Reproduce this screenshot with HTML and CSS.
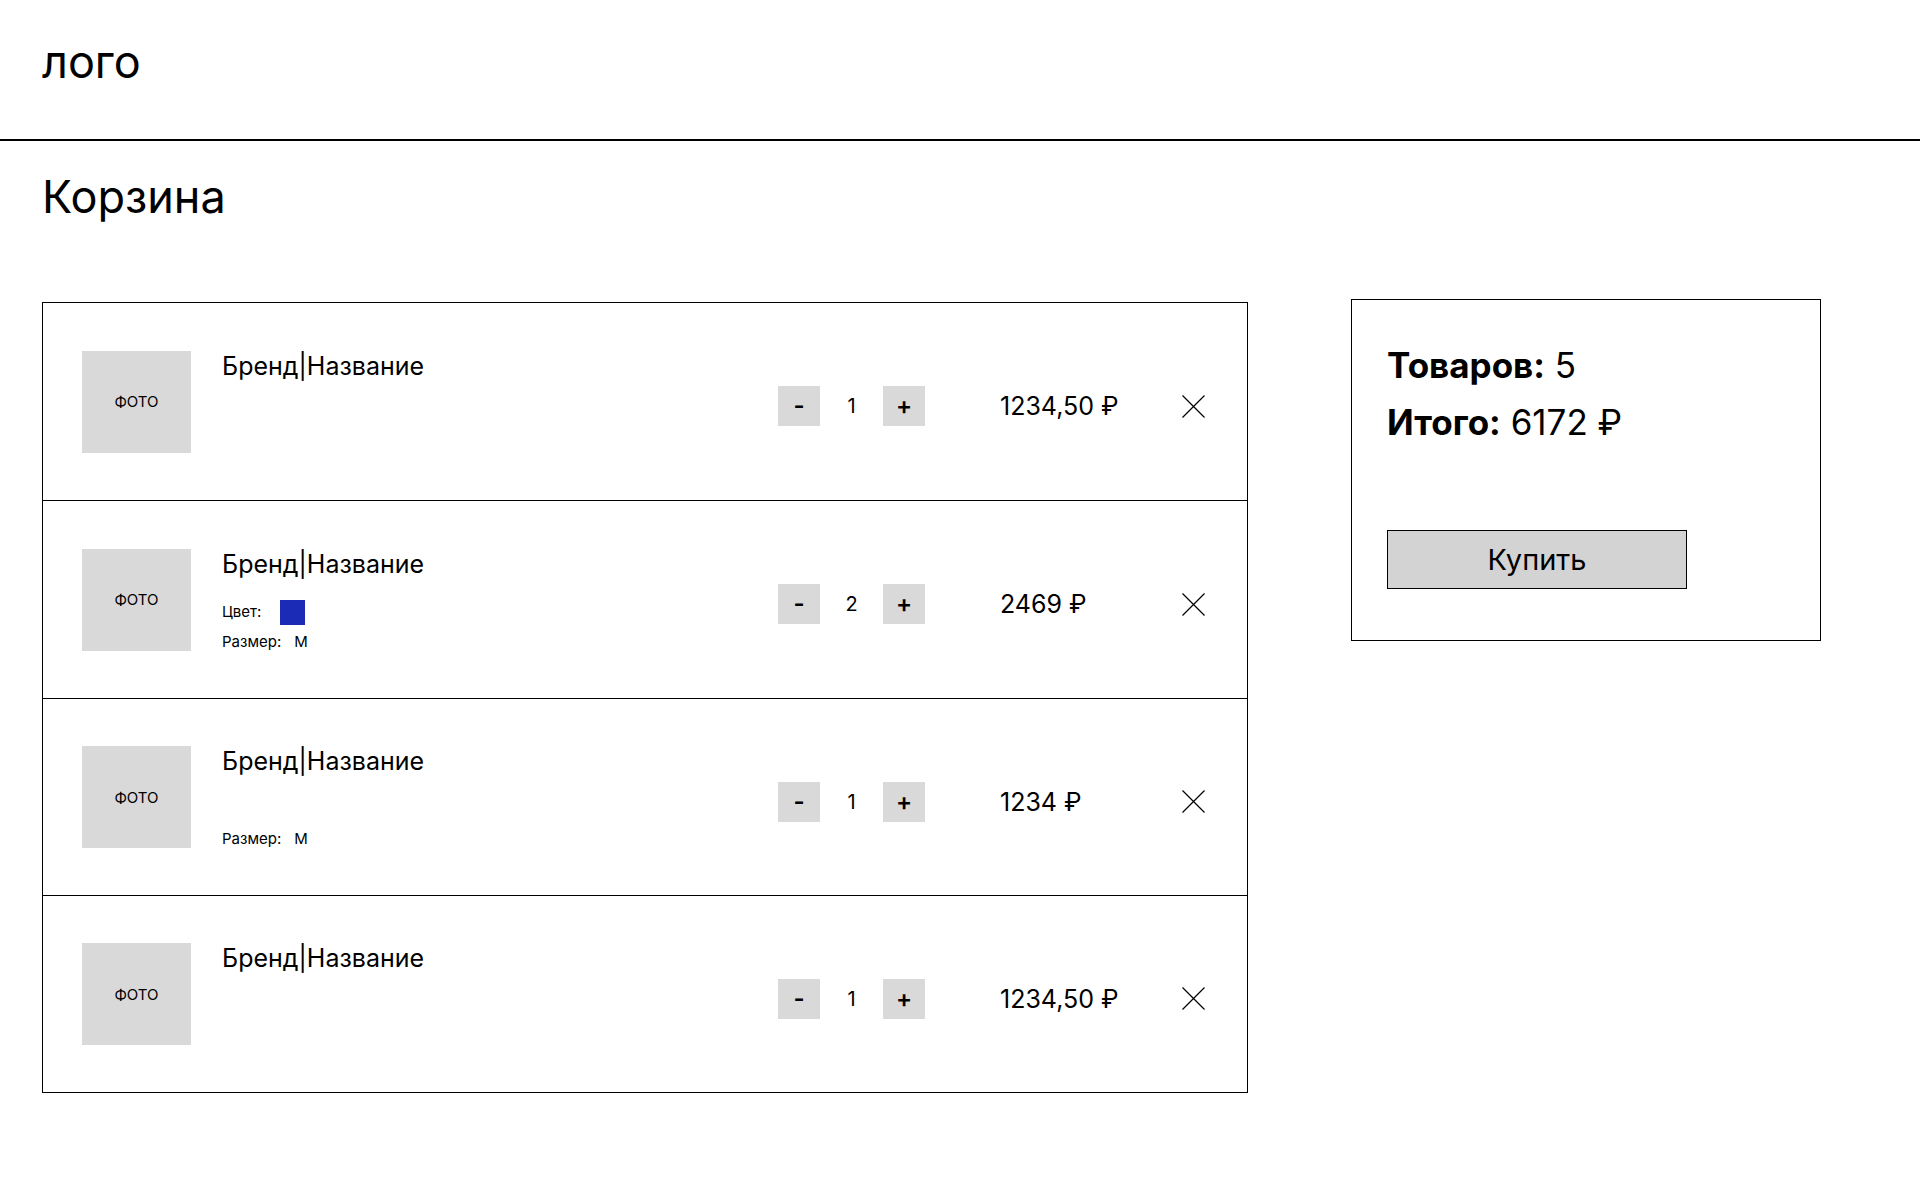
FILE: index.html
```html
<!DOCTYPE html>
<html lang="ru">
<head>
<meta charset="utf-8">
<title>Корзина</title>
<link rel="stylesheet" href="styles.css">
</head>
<body>
<header class="header">
  <div class="logo">лого</div>
</header>
<main class="page">
  <h1 class="title">Корзина</h1>
  <div class="layout">
    <section class="cart">
      <div class="item">
        <div class="photo">ФОТО</div>
        <div class="info">
          <div class="brand">Бренд|Название</div>
        </div>
        <div class="actions">
          <div class="qty">
            <button class="qty-btn">-</button>
            <span class="qty-value">1</span>
            <button class="qty-btn">+</button>
          </div>
          <div class="price">1234,50 ₽</div>
          <svg class="remove" width="23" height="23" viewBox="0 0 23 23"><path d="M0.5 0.5L22.5 22.5M22.5 0.5L0.5 22.5" stroke="#000" stroke-width="1.2" fill="none"/></svg>
        </div>
      </div>
      <div class="item">
        <div class="photo">ФОТО</div>
        <div class="info">
          <div class="brand">Бренд|Название</div>
          <div class="prop prop-color"><span class="prop-label">Цвет:</span><span class="swatch"></span></div>
          <div class="prop prop-size"><span class="prop-label">Размер:</span><span class="prop-value">M</span></div>
        </div>
        <div class="actions">
          <div class="qty">
            <button class="qty-btn">-</button>
            <span class="qty-value">2</span>
            <button class="qty-btn">+</button>
          </div>
          <div class="price">2469 ₽</div>
          <svg class="remove" width="23" height="23" viewBox="0 0 23 23"><path d="M0.5 0.5L22.5 22.5M22.5 0.5L0.5 22.5" stroke="#000" stroke-width="1.2" fill="none"/></svg>
        </div>
      </div>
      <div class="item item-short">
        <div class="photo">ФОТО</div>
        <div class="info">
          <div class="brand">Бренд|Название</div>
          <div class="prop prop-size"><span class="prop-label">Размер:</span><span class="prop-value">M</span></div>
        </div>
        <div class="actions">
          <div class="qty">
            <button class="qty-btn">-</button>
            <span class="qty-value">1</span>
            <button class="qty-btn">+</button>
          </div>
          <div class="price">1234 ₽</div>
          <svg class="remove" width="23" height="23" viewBox="0 0 23 23"><path d="M0.5 0.5L22.5 22.5M22.5 0.5L0.5 22.5" stroke="#000" stroke-width="1.2" fill="none"/></svg>
        </div>
      </div>
      <div class="item">
        <div class="photo">ФОТО</div>
        <div class="info">
          <div class="brand">Бренд|Название</div>
        </div>
        <div class="actions">
          <div class="qty">
            <button class="qty-btn">-</button>
            <span class="qty-value">1</span>
            <button class="qty-btn">+</button>
          </div>
          <div class="price">1234,50 ₽</div>
          <svg class="remove" width="23" height="23" viewBox="0 0 23 23"><path d="M0.5 0.5L22.5 22.5M22.5 0.5L0.5 22.5" stroke="#000" stroke-width="1.2" fill="none"/></svg>
        </div>
      </div>
    </section>
    <aside class="summary">
      <div class="summary-line"><b>Товаров:</b> 5</div>
      <div class="summary-line summary-total"><b>Итого:</b> 6172 ₽</div>
      <button class="buy">Купить</button>
    </aside>
  </div>
</main>
</body>
</html>
```
FILE: styles.css
```css
* {
  box-sizing: border-box;
}

body {
  margin: 0;
  font-family: Inter, "Noto Sans", "Liberation Sans", sans-serif;
  color: #000;
  background: #fff;
}

.header {
  height: 141px;
  border-bottom: 2px solid #000;
  padding: 34px 42px 0;
}

.logo {
  font-size: 45px;
  line-height: normal;
}

.title {
  margin: 28px 0 0;
  padding: 0 42px;
  font-size: 45px;
  font-weight: 400;
  line-height: normal;
}

.layout {
  display: flex;
  align-items: flex-start;
  gap: 103px;
  padding: 0 42px;
  margin-top: 75px;
}

.cart {
  width: 1206px;
  margin-top: 3px;
  border: 1px solid #000;
}

.item {
  display: flex;
  align-items: center;
  height: 198px;
  padding: 0 42px 0 39px;
  border-bottom: 1px solid #000;
}

.item-short {
  height: 197px;
}

.item:last-child {
  height: 196px;
  border-bottom: none;
}

.photo {
  width: 109px;
  height: 102px;
  flex: none;
  background: #d9d9d9;
  display: flex;
  align-items: center;
  justify-content: center;
  font-size: 15px;
}

.info {
  flex: 1;
  height: 102px;
  margin-left: 31px;
  display: flex;
  flex-direction: column;
}

.brand {
  font-size: 25px;
  line-height: 31px;
}

.prop {
  display: flex;
  align-items: center;
  font-size: 15px;
  line-height: 18px;
}

.prop-color {
  margin-top: 20px;
  height: 25px;
}

.prop-size {
  margin-top: auto;
}

.swatch {
  width: 25px;
  height: 25px;
  margin-left: 19px;
  background: #1c2bb6;
}

.prop-value {
  margin-left: 13px;
}

.actions {
  display: flex;
  align-items: center;
  margin-top: 9px;
}

.qty {
  display: flex;
  align-items: center;
}

.qty-btn {
  width: 42px;
  height: 40px;
  padding: 0;
  border: none;
  background: #d9d9d9;
  font-family: inherit;
  font-size: 24px;
  font-weight: 600;
  line-height: 40px;
  color: #000;
}

.qty-value {
  width: 63px;
  text-align: center;
  font-size: 20px;
}

.price {
  width: 182px;
  margin-left: 75px;
  font-size: 25px;
  line-height: 30px;
}

.remove {
  display: block;
  flex: none;
}

.summary {
  width: 470px;
  height: 342px;
  border: 1px solid #000;
  padding: 44px 35px 0;
}

.summary-line {
  font-size: 35px;
  line-height: 42px;
}

.summary-line b {
  font-weight: 700;
}

.summary-total {
  margin-top: 15px;
}

.buy {
  display: block;
  width: 300px;
  height: 59px;
  margin-top: 87px;
  padding: 0;
  border: 1px solid #000;
  background: #d3d3d3;
  font-family: inherit;
  font-size: 29px;
  color: #000;
}
```
